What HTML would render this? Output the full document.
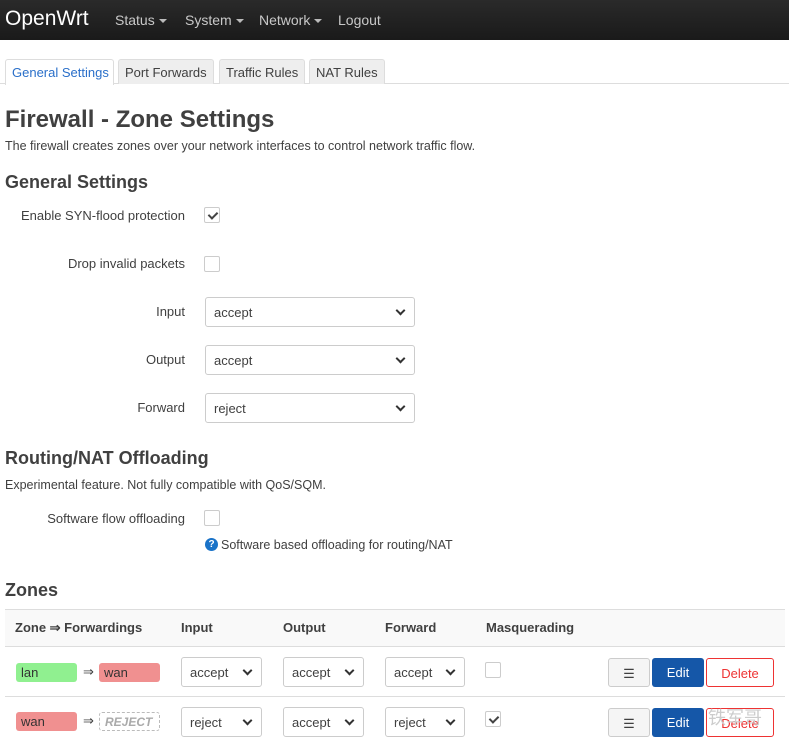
<!DOCTYPE html>
<html><head><style>
*{margin:0;padding:0;box-sizing:border-box}
body{width:789px;height:748px;overflow:hidden;background:#fff;font-family:"Liberation Sans",Arial,sans-serif;color:#404040;position:relative;font-size:13px}
.a{position:absolute;white-space:nowrap}
.hdr{left:0;top:0;width:789px;height:40px;background:linear-gradient(#2a2a2a,#1a1a1a)}
.nav{color:#c8c8c8;font-size:14px;top:12px}
.car{display:inline-block;border-left:4px solid transparent;border-right:4px solid transparent;border-top:4px solid #bbb;vertical-align:middle;margin-left:4px}
.tab{top:59px;height:25px;border:1px solid #ddd;border-bottom:none;background:#eee;border-radius:3px 3px 0 0;font-size:13px;padding:5px 6px 0;color:#404040}
.lbl{font-size:13px;text-align:right;right:604px}
.cb{width:16px;height:16px;border:1px solid #ccc;border-radius:2px;background:#fff;left:204px}
.cb.on::after{content:"";position:absolute;left:5px;top:2px;width:4px;height:7px;border:solid #444;border-width:0 2px 2px 0;transform:rotate(45deg)}
.sel{border:1px solid #ccc;border-radius:3px;background:#fff;height:30px;font-size:13px;padding:7px 0 0 8px}
.sel::after{content:"";position:absolute;right:10px;top:9px;width:5px;height:5px;border:solid #333;border-width:0 2px 2px 0;transform:rotate(45deg)}
.th{font-size:13px;font-weight:bold;top:620px;color:#404040}
.bdg{height:19px;border-radius:3px;font-size:13px;padding:2px 0 0 5px;color:#333;width:61px}
.btn{height:29px;border-radius:3px;font-size:13px;text-align:center;padding-top:7px}
</style></head><body>
<div class="a hdr"></div>
<div class="a" style="left:5px;top:7px;color:#fff;font-size:21px">OpenWrt</div>
<div class="a nav" style="left:115px">Status<span class="car"></span></div>
<div class="a nav" style="left:185px">System<span class="car"></span></div>
<div class="a nav" style="left:259px">Network<span class="car"></span></div>
<div class="a nav" style="left:338px">Logout</div>
<div class="a" style="left:0;top:83px;width:789px;height:1px;background:#ddd"></div>
<div class="a tab" style="left:5px;width:109px;background:#fff;color:#2a6fc9;height:26px">General Settings</div>
<div class="a tab" style="left:118px;width:96px">Port Forwards</div>
<div class="a tab" style="left:219px;width:86px">Traffic Rules</div>
<div class="a tab" style="left:309px;width:76px">NAT Rules</div>
<div class="a" style="left:5px;top:106px;font-size:24px;font-weight:bold;color:#404040">Firewall - Zone Settings</div>
<div class="a" style="left:5px;top:139px;font-size:12.5px">The firewall creates zones over your network interfaces to control network traffic flow.</div>
<div class="a" style="left:5px;top:172px;font-size:18px;font-weight:bold">General Settings</div>
<div class="a lbl" style="top:208px">Enable SYN-flood protection</div>
<div class="a cb on" style="top:207px"></div>
<div class="a lbl" style="top:256px">Drop invalid packets</div>
<div class="a cb" style="top:256px"></div>
<div class="a lbl" style="top:304px">Input</div>
<div class="a sel" style="left:205px;top:297px;width:210px">accept</div>
<div class="a lbl" style="top:352px">Output</div>
<div class="a sel" style="left:205px;top:345px;width:210px">accept</div>
<div class="a lbl" style="top:400px">Forward</div>
<div class="a sel" style="left:205px;top:393px;width:210px">reject</div>
<div class="a" style="left:5px;top:448px;font-size:18px;font-weight:bold">Routing/NAT Offloading</div>
<div class="a" style="left:5px;top:478px;font-size:12.5px">Experimental feature. Not fully compatible with QoS/SQM.</div>
<div class="a lbl" style="top:511px">Software flow offloading</div>
<div class="a cb" style="top:510px"></div>
<div class="a" style="left:205px;top:538px;width:13px;height:13px;border-radius:50%;background:#1a73c8;color:#fff;font-size:10px;font-weight:bold;text-align:center;line-height:13px">?</div>
<div class="a" style="left:221px;top:538px;font-size:12.5px">Software based offloading for routing/NAT</div>
<div class="a" style="left:5px;top:580px;font-size:18px;font-weight:bold">Zones</div>
<div class="a" style="left:5px;top:609px;width:780px;height:38px;background:#f9f9f9;border-top:1px solid #ddd;border-bottom:1px solid #ddd"></div>
<div class="a th" style="left:15px">Zone ⇒ Forwardings</div>
<div class="a th" style="left:181px">Input</div>
<div class="a th" style="left:283px">Output</div>
<div class="a th" style="left:385px">Forward</div>
<div class="a th" style="left:486px">Masquerading</div>
<div class="a" style="left:5px;top:696px;width:780px;height:1px;background:#ddd"></div>
<div class="a bdg" style="left:16px;top:663px;background:#90f090">lan</div>
<div class="a" style="left:83px;top:664px">⇒</div>
<div class="a bdg" style="left:99px;top:663px;background:#f09090">wan</div>
<div class="a sel" style="left:181px;top:657px;width:81px">accept</div>
<div class="a sel" style="left:283px;top:657px;width:81px">accept</div>
<div class="a sel" style="left:385px;top:657px;width:80px">accept</div>
<div class="a cb" style="left:485px;top:662px"></div>
<div class="a btn" style="left:608px;top:658px;width:42px;border:1px solid #ccc;background:#f5f5f5">☰</div>
<div class="a btn" style="left:652px;top:658px;width:52px;background:#1557a8;color:#fff">Edit</div>
<div class="a btn" style="left:706px;top:658px;width:68px;border:1px solid #e33;color:#e33;background:#fff">Delete</div>
<div class="a bdg" style="left:16px;top:712px;background:#f09090">wan</div>
<div class="a" style="left:83px;top:713px">⇒</div>
<div class="a bdg" style="left:99px;top:712px;border:1px dashed #bbb;color:#aaa;font-style:italic;font-weight:bold;font-size:12px">REJECT</div>
<div class="a sel" style="left:181px;top:707px;width:81px">reject</div>
<div class="a sel" style="left:283px;top:707px;width:81px">accept</div>
<div class="a sel" style="left:385px;top:707px;width:80px">reject</div>
<div class="a cb on" style="left:485px;top:711px"></div>
<div class="a btn" style="left:608px;top:708px;width:42px;border:1px solid #ccc;background:#f5f5f5">☰</div>
<div class="a btn" style="left:652px;top:708px;width:52px;background:#1557a8;color:#fff">Edit</div>
<div class="a btn" style="left:706px;top:708px;width:68px;border:1px solid #e33;color:#e33;background:#fff">Delete</div>
<div class="a" style="left:708px;top:704px;font-size:18px;color:#ccc;font-family:'Liberation Sans','Noto Sans CJK SC',sans-serif">铁军哥</div>
</body></html>
